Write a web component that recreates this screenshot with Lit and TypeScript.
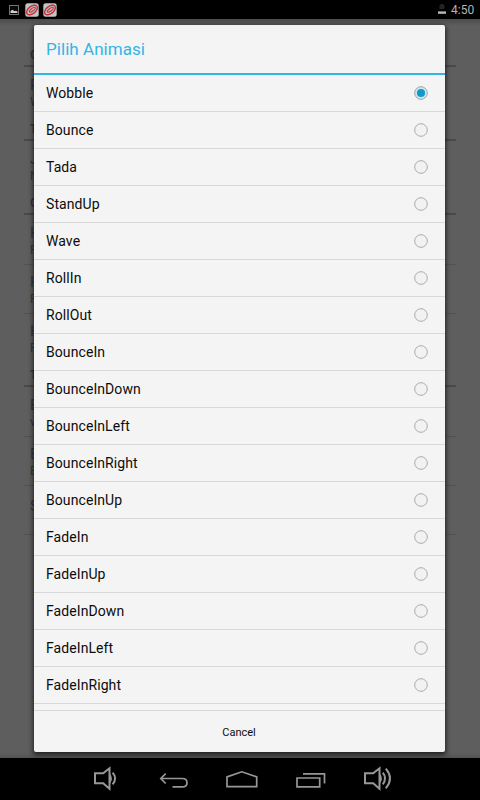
import { LitElement, html, css, svg } from "lit";
import { customElement, property } from "lit/decorators.js";

const ANIMATIONS = [
  "Wobble", "Bounce", "Tada", "StandUp", "Wave", "RollIn", "RollOut", "BounceIn",
  "BounceInDown", "BounceInLeft", "BounceInRight", "BounceInUp", "FadeIn",
  "FadeInUp", "FadeInDown", "FadeInLeft", "FadeInRight",
];

@customElement("status-bar")
class StatusBar extends LitElement {
  static styles = css`
    :host { display: flex; align-items: center; height: 19px; background: #000; padding: 0 5px 0 8px; box-sizing: border-box; }
    svg { display: block; flex: none; }
    .app { margin-left: 5px; }
    .app + .app { margin-left: 4px; }
    .battery { margin-left: auto; }
    .clock { margin-left: 5px; font-size: 12px; line-height: 19px; padding-top: 1px; color: #b4b4b4; width: 24px; white-space: nowrap; }
  `;
  private badge() {
    return html`<svg class="app" width="14" height="14" viewBox="0 0 14 14">
      <rect x=".3" y=".3" width="13.4" height="13.4" rx="2.5" fill="#c4c4c4" />
      <g transform="rotate(-38 7 7)" fill="none" stroke="#c4303a">
        <ellipse cx="7" cy="7" rx="6.2" ry="3.6" stroke-width="1.4" />
        <ellipse cx="7.4" cy="7" rx="3.6" ry="1.3" stroke-width="1.1" />
      </g>
    </svg>`;
  }
  render() {
    return html`
      <svg width="12" height="12" viewBox="0 0 12 12">
        <rect x="1.5" y="1.5" width="9" height="9" fill="#080808" stroke="#737373" />
        <path d="M2.5 9V7l2-1.2 2 1.5 1.5-.6 1.5 1V9z" fill="#d0d0d0" />
      </svg>
      ${this.badge()}${this.badge()}
      <svg class="battery" width="8" height="12" viewBox="0 0 8 12">
        <path d="M2.5 0h3v1h1v4h-5V1h1z" fill="#242424" />
        <rect x="0" y="7.4" width="8" height="2.4" fill="#b8b8b8" />
      </svg>
      <span class="clock">4:50</span>`;
  }
}

type Entry = { kind: "head" | "item" | "last"; lines: string[] };
const SETTINGS: Entry[] = [
  { kind: "head", lines: ["G"] },
  { kind: "item", lines: ["P", "W"] },
  { kind: "head", lines: ["T"] },
  { kind: "item", lines: ["J", "N"] },
  { kind: "head", lines: ["G"] },
  { kind: "item", lines: ["H", "P"] },
  { kind: "item", lines: ["H", "P"] },
  { kind: "item", lines: ["H", "P"] },
  { kind: "head", lines: ["T"] },
  { kind: "item", lines: ["B", "v"] },
  { kind: "item", lines: ["B", "B"] },
  { kind: "last", lines: ["S"] },
];

@customElement("settings-list")
class SettingsList extends LitElement {
  static styles = css`
    :host { display: block; box-sizing: border-box; height: 100%; padding: 23px 24px 0; color: #383838;
      background: linear-gradient(#4c4c4c, #5e5e5e 7px, #5e5e5e calc(100% - 5px), #525252); }
    .head, .item, .last { box-sizing: border-box; padding-left: 6px; overflow: hidden; }
    .head { height: 25px; border-bottom: 2px solid #494949; font-size: 12px; font-weight: 700; line-height: 27px; }
    .item, .last { height: 49px; }
    .item + .item, .item + .last { border-top: 1px solid #525252; }
    .item { padding-top: 8px; }
    .item + .item { padding-top: 7px; }
    .last { height: 50px; border-bottom: 1px solid #525252; line-height: 41px; font-size: 15px; }
    .title { font-size: 15px; line-height: 20px; }
    .sub { font-size: 12px; line-height: 15px; }
  `;
  render() {
    return SETTINGS.map(({ kind, lines }) => kind === "item"
      ? html`<div class="item"><div class="title">${lines[0]}</div><div class="sub">${lines[1]}</div></div>`
      : html`<div class=${kind}>${lines[0]}</div>`);
  }
}

@customElement("choice-dialog")
class ChoiceDialog extends LitElement {
  static styles = css`
    :host { display: flex; flex-direction: column; background: #f4f4f4; border-radius: 2px; overflow: hidden;
      box-shadow: 0 2px 5px 1px rgba(0, 0, 0, .65); color: #0c0c0c; }
    .title { height: 48px; line-height: 49px; padding-left: 12px; font-size: 17px; letter-spacing: .05px;
      color: #33b5e5; border-bottom: 2px solid #33b5e5; flex: none; }
    .list { flex: 1; border-bottom: 1px solid #d8d8d8; }
    .row { display: flex; align-items: center; justify-content: space-between; box-sizing: border-box;
      height: 37px; padding: 0 17px 0 12px; border-bottom: 1px solid #d8d8d8; font-size: 14px; letter-spacing: .08px; }
    .row svg { display: block; }
    .cancel { flex: none; height: 41px; line-height: 43px; text-align: center; font-size: 11px; padding-right: 1px; }
  `;
  @property({ type: Number }) selected = 0;

  render() {
    return html`
      <div class="title">Pilih Animasi</div>
      <div class="list">
        ${ANIMATIONS.map((name, i) => html`<div class="row"><span>${name}</span>
          <svg width="14" height="14" viewBox="0 0 14 14">
            <circle cx="7" cy="7" r="6.3" fill=${i === this.selected ? "#d5e8ef" : "#f2f2f2"} stroke=${i === this.selected ? "#919b9f" : "#a3a3a3"} stroke-width=".9" />
            ${i === this.selected ? svg`<circle cx="7" cy="7" r="4.1" fill="#1099cb" />` : ""}
          </svg></div>`)}
      </div>
      <div class="cancel">Cancel</div>`;
  }
}

@customElement("nav-bar")
class NavBar extends LitElement {
  static styles = css`
    :host { display: flex; justify-content: center; height: 42px; background: #000; }
    .key { width: 67.7px; display: flex; justify-content: center; align-items: center; }
    svg { display: block; overflow: visible; fill: none; stroke: #979797; stroke-width: 1.7; }
    .volume { stroke-width: 2; }
  `;
  render() {
    const speaker = svg`<path d="M3 8.8h8.2l6.3-5V24.2l-6.3-5.5H3z" /><path d="M18 9q3.7 5 0 10z" fill="#979797" stroke="none" />`;
    return html`
      <div class="key"><svg class="volume" width="32" height="28" viewBox="-3 .5 32 28">${speaker}<path d="M20.6 8.2q5.2 5.8 0 11.6" /></svg></div>
      <div class="key"><svg width="32" height="28" viewBox="-1.5 .5 32 28"><path d="M8.2 9.2 3.3 14l4.9 5M3.5 14h21.2q4.8 0 4.8 4.2t-4.8 4.2H15" /></svg></div>
      <div class="key"><svg width="34" height="28" viewBox="-1.5 .5 34 28"><path d="M2.5 22.2v-9.8L17.3 7.3l14.9 5.1v9.8z" /></svg></div>
      <div class="key"><svg width="32" height="28" viewBox="-3 .5 32 28"><path d="M2 13.5h22.7v8.8H2zM8 9.3h21.5V19" /></svg></div>
      <div class="key"><svg class="volume" width="32" height="28" viewBox="-3 .5 32 28">${speaker}<path d="M20.8 8.2q4.6 5.8 0 11.6M23.8 4.2q8.4 9.8 0 19.6" /></svg></div>`;
  }
}

@customElement("app-root")
class AppRoot extends LitElement {
  static styles = css`
    :host { display: flex; flex-direction: column; width: 480px; height: 800px; overflow: hidden;
      background: #000; font-family: Roboto, "Liberation Sans", sans-serif; }
    .screen { position: relative; flex: 1; min-height: 0; overflow: hidden; }
    .dialog { position: absolute; inset: 6px 35px 6px 34px; }
  `;
  render() {
    return html`
      <status-bar></status-bar>
      <div class="screen">
        <settings-list></settings-list>
        <choice-dialog class="dialog" .selected=${0}></choice-dialog>
      </div>
      <nav-bar></nav-bar>`;
  }
}
